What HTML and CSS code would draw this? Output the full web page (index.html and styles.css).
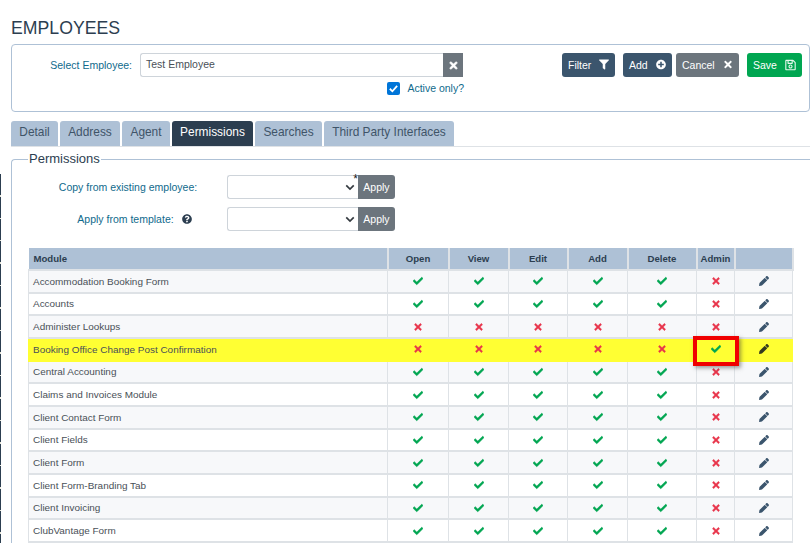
FILE: index.html
```html
<!DOCTYPE html>
<html lang="en">
<head>
<meta charset="utf-8">
<title>Employees</title>
<link rel="stylesheet" href="styles.css">
</head>
<body>
<svg class="sprites" width="0" height="0" aria-hidden="true">
  <symbol id="check" viewBox="0 0 512 512"><path d="M173.900 439.400 7.500 273c-10-10-10-26.200 0-36.200l36.200-36.200c10-10 26.200-10 36.200 0L192 312.700 432.100 72.600c10-10 26.200-10 36.200 0l36.200 36.200c10 10 10 26.200 0 36.200L210.100 439.400c-10 10-26.200 10-36.200 0z"/></symbol>
  <symbol id="times" viewBox="0 0 352 512"><path d="m242.720 256 100.070-100.070c12.280-12.280 12.280-32.190 0-44.480l-22.240-22.240c-12.280-12.280-32.190-12.280-44.480 0L176 189.280 75.930 89.210c-12.280-12.280-32.190-12.280-44.480 0L9.210 111.450c-12.280 12.280-12.280 32.190 0 44.480L109.280 256 9.210 356.070c-12.280 12.280-12.280 32.190 0 44.480l22.240 22.240c12.280 12.280 32.200 12.280 44.480 0L176 322.720l100.070 100.070c12.280 12.280 32.200 12.280 44.480 0l22.240-22.240c12.280-12.280 12.280-32.190 0-44.480L242.720 256z"/></symbol>
  <symbol id="pencil" viewBox="0 0 512 512"><path d="M497.900 142.100 452 188c-4.700 4.700-12.300 4.700-17 0L324.500 77.500c-4.700-4.700-4.700-12.300 0-17l45.900-45.900c18.700-18.700 49.100-18.700 67.900 0l59.600 59.600c18.800 18.700 18.800 49.100 0 67.900zM285.200 99.800 23.800 361.200 2.700 482.300c-2.900 16.300 11.400 30.600 27.700 27.800l121-21.200L412.800 227.500c4.700-4.700 4.700-12.300 0-17L302.200 99.800c-4.700-4.700-12.300-4.700-17 0z"/></symbol>
  <symbol id="filter" viewBox="0 0 512 512"><path d="M487.976 0H24.028C2.710 0-8.047 25.866 7.058 40.971L192 225.941V432c0 7.831 3.821 15.170 10.237 19.662l80 55.980C298.020 518.690 320 507.493 320 487.980V225.941l184.947-184.970C520.021 25.896 509.338 0 487.976 0z"/></symbol>
  <symbol id="plus" viewBox="0 0 512 512"><path d="M256 8C119 8 8 119 8 256s111 248 248 248 248-111 248-248S393 8 256 8zm144 276c0 6.600-5.400 12-12 12h-92v92c0 6.600-5.400 12-12 12h-56c-6.600 0-12-5.400-12-12v-92h-92c-6.600 0-12-5.400-12-12v-56c0-6.600 5.400-12 12-12h92v-92c0-6.600 5.400-12 12-12h56c6.600 0 12 5.400 12 12v92h92c6.600 0 12 5.400 12 12v56z"/></symbol>
  <symbol id="save" viewBox="0 0 448 512"><path d="m433.900 129.900-83.900-83.900A48 48 0 0 0 316.100 32H48C21.500 32 0 53.500 0 80v352c0 26.500 21.500 48 48 48h352c26.500 0 48-21.500 48-48V163.900a48 48 0 0 0-14.100-34zM272 80v80H144V80h128zm122 352H54a6 6 0 0 1-6-6V86a6 6 0 0 1 6-6h42v104c0 13.300 10.700 24 24 24h176c13.300 0 24-10.700 24-24V83.900l78.200 78.200a6 6 0 0 1 1.800 4.200V426a6 6 0 0 1-6 6zM224 232c-48.500 0-88 39.500-88 88s39.500 88 88 88 88-39.500 88-88-39.500-88-88-88zm0 128c-22.100 0-40-17.900-40-40s17.900-40 40-40 40 17.900 40 40-17.900 40-40 40z"/></symbol>
  <symbol id="question" viewBox="0 0 512 512"><path d="M504 256c0 137-111 248-248 248S8 393 8 256 119 8 256 8s248 111 248 248zM262.700 90c-54.500 0-89.300 23-116.500 63.800-3.500 5.300-2.400 12.400 2.700 16.300l34.700 26.300c5.200 3.900 12.600 3 16.700-2.100 17.900-22.700 30.100-35.800 57.300-35.800 20.400 0 45.700 13.100 45.700 33 0 15-12.400 22.700-32.600 34-23.600 13.200-54.800 29.700-54.800 70.900V300c0 6.600 5.400 12 12 12h56c6.600 0 12-5.400 12-12v-1.300c0-28.600 83.500-29.800 83.500-107.100C379.400 133.400 319 90 262.700 90zM256 339c-25.500 0-46.200 20.700-46.200 46.200 0 25.500 20.700 46.200 46.200 46.200s46.200-20.700 46.200-46.200c0-25.500-20.700-46.200-46.200-46.200z"/></symbol>
</svg>

<div class="edge" aria-hidden="true"></div>

<main class="page">
  <h1 class="title">EMPLOYEES</h1>

  <section class="panel">
    <div class="select-col">
      <div class="select-row">
        <label class="select-label">Select Employee:</label>
        <div class="input-group">
          <div class="text-input">Test Employee</div>
          <button class="square-btn"><svg class="ic ic-times-w"><use href="#times"/></svg></button>
        </div>
      </div>
      <div class="active-row">
        <span class="checkbox"><svg viewBox="0 0 16 16"><path d="M3.500 8.300 6.600 11.400 12.500 4.800" fill="none" stroke="#fff" stroke-width="2.200"/></svg></span>
        <span class="active-label">Active only?</span>
      </div>
    </div>
    <div class="actions">
      <button class="btn btn-navy btn-filter">Filter<svg class="ic"><use href="#filter"/></svg></button>
      <button class="btn btn-navy btn-add">Add<svg class="ic"><use href="#plus"/></svg></button>
      <button class="btn btn-grey btn-cancel">Cancel<svg class="ic"><use href="#times"/></svg></button>
      <button class="btn btn-green btn-save">Save<svg class="ic"><use href="#save"/></svg></button>
    </div>
  </section>

  <nav class="tabs">
    <a class="tab t-detail">Detail</a>
    <a class="tab t-address">Address</a>
    <a class="tab t-agent">Agent</a>
    <a class="tab t-perm active">Permissions</a>
    <a class="tab t-search">Searches</a>
    <a class="tab t-third">Third Party Interfaces</a>
  </nav>

  <fieldset class="perm">
    <legend class="perm-legend">Permissions</legend>

    <div class="copy-row">
      <label class="copy-label">Copy from existing employee:</label>
      <div class="select-group">
        <div class="select-box"><svg class="chev" viewBox="0 0 12 8"><path d="M1.500 1.500 6 6 10.500 1.500" fill="none" stroke="#343a40" stroke-width="2"/></svg><span class="star">*</span></div>
        <button class="apply">Apply</button>
      </div>
    </div>
    <div class="copy-row second">
      <label class="copy-label">Apply from template:<svg class="ic help"><use href="#question"/></svg></label>
      <div class="select-group">
        <div class="select-box"><svg class="chev" viewBox="0 0 12 8"><path d="M1.500 1.500 6 6 10.500 1.500" fill="none" stroke="#343a40" stroke-width="2"/></svg></div>
        <button class="apply">Apply</button>
      </div>
    </div>

    <div class="table-wrap">
    <table class="grid">
      <colgroup>
        <col class="c-mod"><col class="c-open"><col class="c-view"><col class="c-edit"><col class="c-add"><col class="c-del"><col class="c-adm"><col class="c-act">
      </colgroup>
      <thead>
        <tr><th class="left">Module</th><th>Open</th><th>View</th><th>Edit</th><th>Add</th><th>Delete</th><th>Admin</th><th></th></tr>
      </thead>
      <tbody id="rows"></tbody>
    </table>
    <div class="callout" aria-hidden="true"></div>
    </div>
  </fieldset>
</main>
<script src="app.js"></script>
</body>
</html>
```
FILE: styles.css
```css
* { box-sizing: border-box; }
html, body { margin: 0; padding: 0; height: 543px; overflow: hidden; background: #fff; }
body { font-family: "Liberation Sans", Arial, sans-serif; color: #2c3e50; position: relative; }
.sprites { position: absolute; }
.ic { fill: currentColor; display: block; }

.edge {
  position: absolute; left: 0; top: 174px; width: 1px; height: 369px;
  background: repeating-linear-gradient(to bottom, #2c3e50 0 21px, #e8e6d8 21px 22.500px);
}

.page { padding: 0 0 0 11px; width: 810px; }
.title { margin: 0; padding-top: 18px; height: 44px; font-size: 17.700px; line-height: 21px; font-weight: 400; color: #2c3e50; }

.panel {
  width: 799px; height: 68px; border: 1px solid #aec1d6; border-radius: 4px;
  display: flex; justify-content: space-between; padding: 8px 7px 0 0;
}
.select-col { width: 452px; }
.select-row { display: flex; align-items: center; height: 24px; }
.select-label { width: 120px; padding-bottom: 1px; text-align: right; font-size: 10.500px; color: #0f6a8c; margin-right: 8px; white-space: nowrap; }
.input-group { display: flex; width: 323px; }
.text-input {
  flex: 1; height: 24px; border: 1px solid #ced4da; border-right: 0; border-radius: 3px 0 0 3px;
  padding-left: 5px; font-size: 10.500px; line-height: 21px; color: #495057;
}
.square-btn { width: 20px; height: 24px; border: 0; padding: 0; background: #6c757d; color: #fff; display: flex; align-items: center; justify-content: center; }
.ic-times-w { width: 9px; height: 11px; stroke: currentColor; stroke-width: 24px; }
.active-row { display: flex; justify-content: flex-end; align-items: center; margin-top: 3px; height: 16px; }
.checkbox { width: 13px; height: 13px; background: #0075d8; border-radius: 2px; display: block; }
.checkbox svg { display: block; width: 13px; height: 13px; }
.active-label { font-size: 10.500px; color: #0f6a8c; margin-left: 7px; }

.actions { display: flex; align-items: flex-start; }
.btn {
  height: 24px; border: 0; border-radius: 3px; color: #fff; padding: 0 6px 1px; font: 10.500px "Liberation Sans", Arial, sans-serif;
  display: flex; align-items: center; justify-content: space-between;
}
.btn .ic { width: 10px; height: 11px; }
.btn-navy { background: #3b556d; }
.btn-grey { background: #6c757d; }
.btn-green { background: #00a651; }
.btn-filter { width: 53px; margin-right: 8px; }
.btn-add { width: 49px; margin-right: 4px; }
.btn-cancel { width: 63px; margin-right: 8px; }
.btn-save { width: 55px; }
.btn-save .ic { color: #e4f8ec; width: 11px; height: 12px; }

.tabs { display: flex; gap: 2px; margin-top: 9px; height: 26px; border-bottom: 1px solid #dee2e6; width: 799px; align-items: flex-start; }
.tab {
  height: 25px; background: #aec1d6; border-radius: 3px 3px 0 0; font-size: 11.900px; line-height: 23px; text-align: center; color: #3f5468; white-space: nowrap;
}
.t-detail { width: 47px; }
.t-address { width: 60px; }
.t-agent { width: 48px; }
.t-perm { width: 81px; }
.t-search { width: 67px; }
.t-third { width: 130px; }
.tab.active { background: #2c3e50; color: #fff; }

.perm { margin: 5px 0 0; padding: 0 0 0 16px; width: 830px; border: 0; border-top: 1px solid #aec1d6; border-left: 1px solid #aec1d6; border-radius: 4px 0 0 0; min-width: 0; }
.perm-legend { padding: 0 1px; margin-left: 0; font-size: 13px; line-height: 14px; color: #2c3e50; }

.copy-row { display: flex; align-items: center; height: 24px; margin-top: 9px; }
.copy-row.second { margin-top: 8px; }
.copy-label { width: 198px; font-size: 10.500px; color: #0f6a8c; display: flex; justify-content: center; align-items: center; padding-left: 2px; }
.second .copy-label { padding-left: 15px; }
.help { width: 10px; height: 10px; margin-left: 8px; color: #2c3e50; }
.select-group { display: flex; margin-left: 1px; }
.select-box {
  width: 131px; height: 24px; border: 1px solid #ced4da; border-right: 0; border-radius: 3px 0 0 3px; position: relative;
  display: flex; align-items: center; justify-content: flex-end; padding-right: 3px;
}
.chev { width: 10px; height: 7px; display: block; }
.star { position: absolute; right: 0; top: -3px; font-size: 12px; line-height: 12px; color: #222; }
.apply { width: 37px; height: 24px; border: 0; padding: 0; background: #6c757d; color: #fff; border-radius: 0 3px 3px 0; font: 10.500px "Liberation Sans", Arial, sans-serif; }

.table-wrap { position: relative; margin-top: 17px; width: 764px; }
.grid { border-collapse: collapse; table-layout: fixed; width: 764px; font-size: 9.950px; }
.c-mod { width: 359px; }
.c-open { width: 61px; }
.c-view { width: 60px; }
.c-edit { width: 59px; }
.c-add { width: 60px; }
.c-del { width: 69px; }
.c-adm { width: 38px; }
.c-act { width: 58px; }
.grid th {
  height: 22px; background: #aec1d6; border: 1px solid #dee2e6; border-width: 0 2px 2px 0; color: #2c3e50; font-size: 9.600px; font-weight: 700; text-align: center; padding: 0;
}
.grid th.left { text-align: left; padding-left: 5px; }
.grid td { height: 22.670px; border: 1px solid #dee2e6; border-width: 0 1px 2px; text-align: center; padding: 0; color: #495057; }
.grid td.name { text-align: left; padding-left: 4px; }
.grid tbody tr:nth-child(odd) td { background: #f7f8fa; }
.grid tbody tr.hl td { background: #ffff33; border-color: #ffff33; }
.cell-ic { display: block; margin: 0 auto; }
.ok { width: 10px; height: 10px; color: #00a651; stroke: currentColor; stroke-width: 24px; }
.no { width: 8px; height: 10px; color: #e8344a; stroke: currentColor; stroke-width: 20px; }
.pen { width: 10px; height: 10px; color: #3b556d; }
.hl .pen { color: #343a1f; }
.callout {
  position: absolute; left: 665px; top: 88px; width: 46px; height: 30px;
  border: 4px solid #f00000; box-shadow: 2px 2px 4px rgba(60,60,60,.5);
}
```
FILE: app.js
```js
var rows = [
  ["Accommodation Booking Form", "yyyyyn"],
  ["Accounts", "yyyyyn"],
  ["Administer Lookups", "nnnnnn"],
  ["Booking Office Change Post Confirmation", "nnnnny", "hl"],
  ["Central Accounting", "yyyyyn"],
  ["Claims and Invoices Module", "yyyyyn"],
  ["Client Contact Form", "yyyyyn"],
  ["Client Fields", "yyyyyn"],
  ["Client Form", "yyyyyn"],
  ["Client Form-Branding Tab", "yyyyyn"],
  ["Client Invoicing", "yyyyyn"],
  ["ClubVantage Form", "yyyyyn"]
];
function icon(id, cls) {
  return '<svg class="ic cell-ic ' + cls + '"><use href="#' + id + '"/></svg>';
}
document.getElementById("rows").innerHTML = rows.map(function (r) {
  var cells = r[1].split("").map(function (c) {
    return "<td>" + (c === "y" ? icon("check", "ok") : icon("times", "no")) + "</td>";
  }).join("");
  return '<tr class="' + (r[2] || "") + '"><td class="name">' + r[0] + "</td>" + cells + "<td>" + icon("pencil", "pen") + "</td></tr>";
}).join("");
```
